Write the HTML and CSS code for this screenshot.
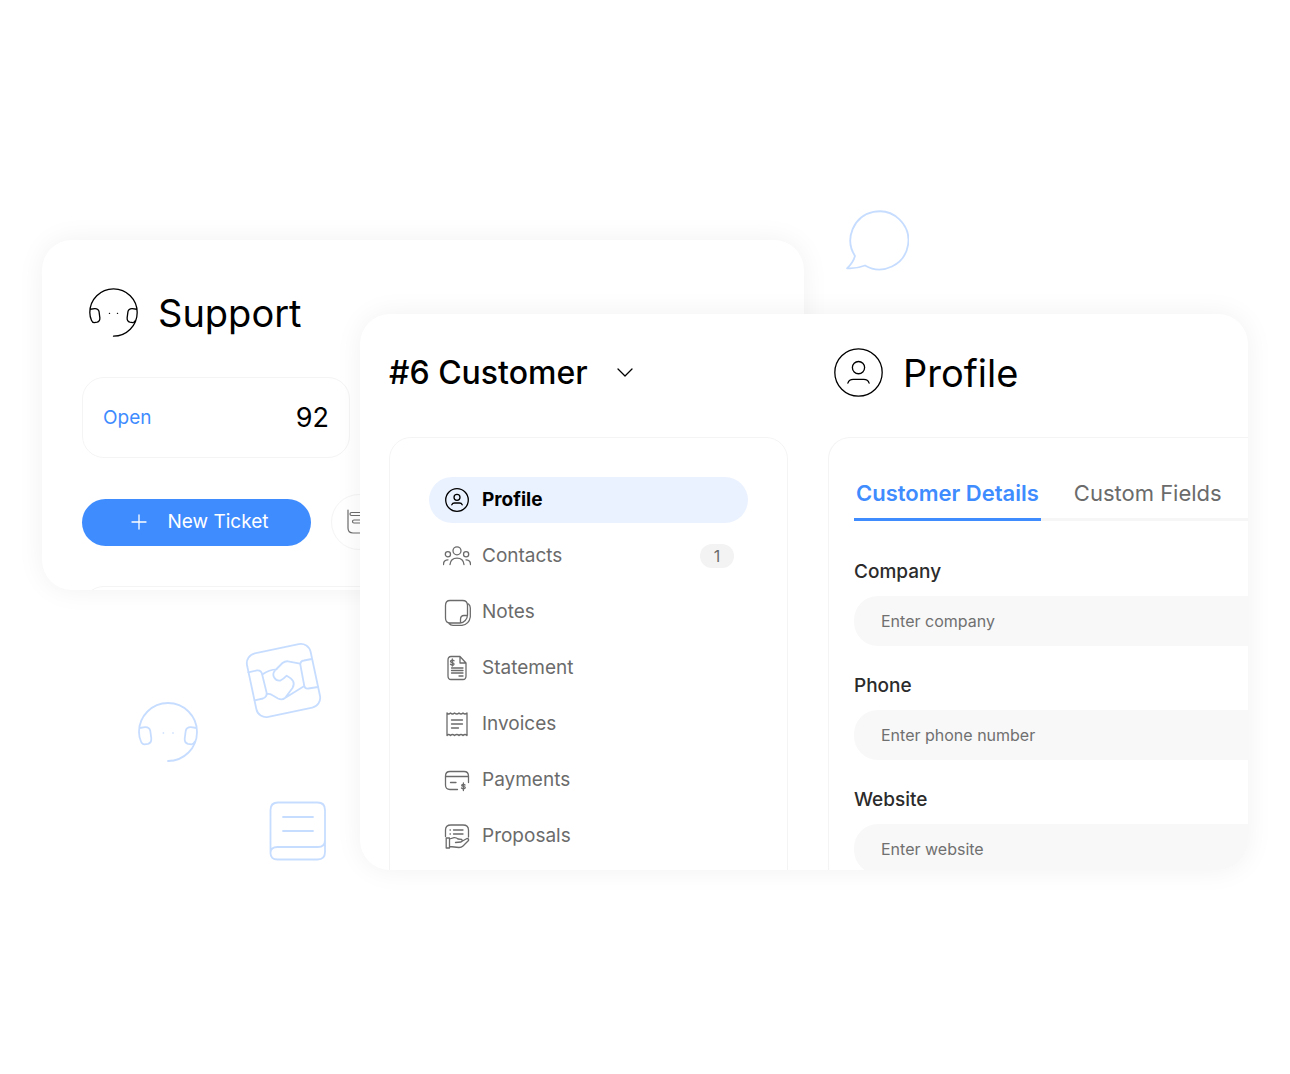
FILE: index.html
```html
<!DOCTYPE html>
<html lang="en">
<head>
<meta charset="utf-8">
<meta name="viewport" content="width=device-width, initial-scale=1">
<title>Support and customer profile</title>
<link rel="stylesheet" href="styles.css">
</head>
<body>
<main class="stage">
  <svg class="deco deco-chat" viewBox="0 0 64 64" aria-hidden="true"><path d="M10 48A29 29 0 1 1 20 57.500Q11 61 2 60.300Q8 55 10 48Z"/></svg>
  <svg class="deco deco-deal" viewBox="0 0 78 78" aria-hidden="true">
    <rect x="6" y="6" width="65" height="65" rx="10" transform="rotate(-12 38.500 38.500)"/>
    <path d="M3.300 30.300L12 28.400Q16.500 28 17.300 33L21.700 51Q22 55 18 56.500L9.700 58.300M66.700 17L59 18.500Q55.300 19 55.300 22.500L59.300 44Q60 47 63.500 46.500L73 45"/>
    <path d="M17.700 32.300Q24 27.500 31.700 27.300M55 21.700L43 19.300Q40 19 37.500 21L30 28.500C26 33 30 39.500 35.500 38.500Q38 37.500 41.700 33.700C48 37 50.500 41 47.500 46L40 56L59.300 44M21.700 52Q25 51.500 27 53L33 56.500Q37 58.500 40 56"/>
  </svg>
  <svg class="deco deco-headset" viewBox="0 0 60 60" aria-hidden="true">
    <path d="M1 30A29 29 0 1 1 59 30A29 29 0 0 1 30 59M1.500 26L7 25.200Q11.500 25 12.300 29L13.300 36.500Q13.500 41 10 41.800L6.500 42.300Q4 42.300 3 39.500Q1 35 1 30M58.500 26L53 25.200Q48.500 25 47.700 29L46.700 36.500Q46.500 41 50 41.800L53.500 42.300Q55.500 42.300 57 39.500"/>
    <path stroke-width="1.400" d="M25.200 31h.4M34.800 31h.4"/>
  </svg>
  <svg class="deco deco-book" viewBox="0 0 60 62" aria-hidden="true"><path d="M2.500 52V10Q2.500 2.500 10 2.500H49.500Q57 2.500 57 10V52Q57 59.500 49.500 59.500H9.500Q2.500 59.500 2.500 53Q2.500 47 9.500 47H50Q57 47 57 40M15 17H45M15 31H45"/></svg>

  <section class="card support">
    <header class="support-head">
      <svg class="head-icon" viewBox="0 0 60 60" aria-hidden="true">
        <path d="M1 30A29 29 0 1 1 59 30A29 29 0 0 1 30 59M1.500 26L7 25.200Q11.500 25 12.300 29L13.300 36.500Q13.500 41 10 41.800L6.500 42.300Q4 42.300 3 39.500Q1 35 1 30M58.500 26L53 25.200Q48.500 25 47.700 29L46.700 36.500Q46.500 41 50 41.800L53.500 42.300Q55.500 42.300 57 39.500"/>
        <path d="M25 31h.2M34.800 31h.2"/>
      </svg>
      <h1 class="page-title">Support</h1>
    </header>
    <a class="stat" href="#open"><span class="stat-name">Open</span><span class="stat-count">92</span></a>
    <div class="actions">
      <button class="new-ticket" type="button">
        <svg class="plus" viewBox="0 0 16 16" aria-hidden="true"><path d="M8 1V15M1 8H15"/></svg>
        New Ticket
      </button>
      <button class="round" type="button" aria-label="Charts">
        <svg class="chart" viewBox="0 0 24 26" aria-hidden="true"><path d="M1 1V19Q1 24 6 24H23M4.500 3.500H19Q20.500 5 19 6.500H4.500Q3 6.500 3 5Q3 3.500 4.500 3.500M7 11H17Q18.500 12.500 17 14H7Q5.500 14 5.500 12.500Q5.500 11 7 11"/></svg>
      </button>
    </div>
    <div class="panel list-panel"></div>
  </section>

  <section class="card customer">
    <div class="column">
      <header class="column-head">
        <button class="customer-select" type="button">#6 Customer
          <svg class="chevron" viewBox="0 0 16 10" aria-hidden="true"><path d="M1 1L8 8L15 1"/></svg>
        </button>
      </header>
      <nav class="panel menu" aria-label="Customer">
        <a class="item active" href="#profile">
          <svg class="icon" viewBox="0 0 28 28" aria-hidden="true"><circle cx="14" cy="14" r="11.300"/><circle cx="14" cy="11.300" r="3"/><path d="M8.800 18.800Q9.500 17 11.500 17H16.500Q18.500 17 19.200 18.800"/></svg>
          Profile</a>
        <a class="item" href="#contacts">
          <svg class="icon" viewBox="0 0 28 28" aria-hidden="true"><circle cx="14" cy="8.800" r="4"/><circle cx="4.900" cy="12.300" r="2.600"/><circle cx="23.100" cy="12.300" r="2.600"/><path d="M7 22.500C7.500 17.800 10 16.200 14 16.200S20.500 17.800 21 22.500M.500 22.500Q.500 17.800 5 17.800M27.500 22.500Q27.500 17.800 23 17.800"/></svg>
          Contacts<span class="count">1</span></a>
        <a class="item" href="#notes">
          <svg class="icon" viewBox="0 0 28 28" aria-hidden="true"><path d="M7 2.500H19.500Q24.500 2.500 24.500 7.500V17C24.500 21 21 25 17 25H7Q2.500 25 2.500 20V7.500Q2.500 2.500 7 2.500ZM17.500 25V21.500Q17.500 17.500 21 17.500H24.500M25.500 6Q27.300 7.500 27.300 10V19Q26 26.500 19 27.300H10Q7.500 27.300 6 25.500"/></svg>
          Notes</a>
        <a class="item" href="#statement">
          <svg class="icon" viewBox="0 0 28 28" aria-hidden="true"><path d="M8 2.500H17L23 9V22Q23 25.500 20 25.500H8Q5 25.500 5 22V6Q5 2.500 8 2.500ZM17 2.500V9H23M8.500 14H20M8.500 16.500H20M8.500 19H20M16 22H20M11 6.800C10 5.700 7.500 6 7.500 7.500S11 8.300 11 10S8.500 11.300 7.500 10.200M9.300 5V12"/></svg>
          Statement</a>
        <a class="item" href="#invoices">
          <svg class="icon" viewBox="0 0 28 28" aria-hidden="true"><path d="M4 3Q5.500 5 7.500 3Q9.500 5 11.500 3Q14 5 16 3Q18 5 20 3Q22 5 24 3V25.500Q22 23.500 20 25.500Q18 23.500 16 25.500Q14 23.500 11.500 25.500Q9.500 23.500 7.500 25.500Q5.500 23.500 4 25.500ZM8.500 10H19.500M8.500 14H19.500M8.500 18H15.500"/></svg>
          Invoices</a>
        <a class="item" href="#payments">
          <svg class="icon" viewBox="0 0 28 28" aria-hidden="true"><path d="M14.500 23.500H7Q2.500 23.500 2.500 19V10Q2.500 5.500 7 5.500H21Q25.500 5.500 25.500 10V16.500M2.500 10.500H25.500M7.500 16.500H13M22 19C21 18 18.700 18.200 18.700 19.500S22.300 20 22.300 21.600S19.500 23.200 18.500 22M20.400 17V24.500"/></svg>
          Payments</a>
        <a class="item" href="#proposals">
          <svg class="icon" viewBox="0 0 28 28" aria-hidden="true"><path d="M2.500 14.500V8Q2.500 3 8 3H20Q25.500 3 25.500 8V15M7 8H7.400M10.500 8H20M7 12H7.400M10.500 12H20M3.200 16H6.500V26H3.200ZM6.500 17L11 15.700Q13.500 15.500 15 17L18.500 17.300Q20 19 18 20L12.500 20.500M19.500 19L24 16.500Q26 16.500 25.500 18.500L20 24Q18.500 25.500 16 25.500L6.500 24.500"/></svg>
          Proposals</a>
      </nav>
    </div>
    <div class="column">
      <header class="column-head profile-head">
        <svg class="head-icon" viewBox="0 0 60 60" aria-hidden="true"><circle cx="30" cy="30" r="29"/><circle cx="30" cy="24" r="7.500"/><path d="M17 43Q18.500 38.500 23.500 38.500H36.500Q41.500 38.500 43 43"/></svg>
        <h2 class="page-title">Profile</h2>
      </header>
      <div class="panel details">
        <div class="tabs" role="tablist">
          <button class="tab selected" type="button" role="tab" aria-selected="true">Customer Details</button>
          <button class="tab" type="button" role="tab" aria-selected="false">Custom Fields</button>
        </div>
        <form class="fields">
          <div class="field"><label for="company">Company</label><input id="company" type="text" placeholder="Enter company"></div>
          <div class="field"><label for="phone">Phone</label><input id="phone" type="tel" placeholder="Enter phone number"></div>
          <div class="field"><label for="website">Website</label><input id="website" type="text" placeholder="Enter website"></div>
        </form>
      </div>
    </div>
  </section>
</main>
</body>
</html>
```
FILE: styles.css
```css
:root {
  --blue: #3f8cff;
  --gray: #6b6b6b;
  --line: #f4f4f4;
}

* { box-sizing: border-box; }

body {
  margin: 0;
  background: #fff;
  color: #000;
  font-family: Inter, "Liberation Sans", sans-serif;
  font-size: 19px;
  line-height: 24px;
}

button, input { font: inherit; }
button { cursor: pointer; }
a { color: inherit; text-decoration: none; }
h1, h2 { margin: 0; }

svg {
  flex: none;
  fill: none;
  stroke: currentColor;
  stroke-linecap: round;
  stroke-linejoin: round;
}

/* The two cards share the middle column and overlap there */
.stage {
  position: relative;
  display: grid;
  grid-template-columns: 318fr 444fr 444fr;
  grid-template-rows: 74px 276px 280px;
  min-height: 100vh;
  padding: 240px 42px 0;
  align-content: start;
  overflow: hidden;
}

.card {
  min-width: 0;
  min-height: 0;
  overflow: hidden;
  background: #fff;
  border-radius: 30px;
  box-shadow: 0 0 28px rgba(0, 0, 0, 0.06);
}

.panel {
  border: 1px solid var(--line);
  border-radius: 22px;
}

.head-icon {
  width: 49px;
  height: 49px;
  stroke-width: 1.600;
}

.page-title {
  font-size: 38px;
  font-weight: 400;
  line-height: 48px;
}

/* Support card */
.support {
  grid-area: 1 / 1 / 3 / 3;
  padding: 48px 40px 0;
}

.support-head {
  display: flex;
  align-items: center;
  gap: 20px;
  padding-left: 7px;
  margin-bottom: 40px;
}

.stat {
  display: flex;
  align-items: center;
  justify-content: space-between;
  width: 268px;
  height: 81px;
  padding: 0 20px;
  border: 1px solid var(--line);
  border-radius: 22px;
}

.stat-name { color: var(--blue); }
.stat-count { font-size: 27px; }

.actions {
  display: flex;
  align-items: center;
  gap: 20px;
  margin: 36px 0;
}

.new-ticket {
  display: flex;
  align-items: center;
  justify-content: center;
  gap: 21px;
  width: 229px;
  height: 47px;
  padding: 0 0 0 6px;
  border: 0;
  border-radius: 24px;
  background: var(--blue);
  color: #fff;
}

.plus { width: 16px; height: 16px; stroke-width: 1.300; }

.round {
  display: grid;
  place-items: center;
  width: 56px;
  height: 56px;
  padding: 0;
  border: 1px solid var(--line);
  border-radius: 50%;
  background: none;
  color: var(--gray);
}

.chart { width: 24px; height: 26px; stroke-width: 1.200; }

.list-panel { height: 80px; }

/* Customer card */
.customer {
  grid-area: 2 / 2 / 4 / 4;
  display: grid;
  grid-template-columns: 399fr 420fr;
  gap: 40px;
  padding: 34px 0 0 29px;
}

.column { min-width: 0; }

.column-head {
  display: flex;
  align-items: center;
  height: 49px;
  margin-bottom: 40px;
}

.profile-head {
  gap: 20px;
  padding-left: 6px;
}

.customer-select {
  display: flex;
  align-items: center;
  gap: 29px;
  padding: 0;
  border: 0;
  background: none;
  color: #000;
  font-size: 32px;
  font-weight: 500;
  line-height: 40px;
}

.chevron { width: 16px; height: 10px; stroke-width: 1.300; }

.menu {
  display: flex;
  flex-direction: column;
  gap: 10px;
  padding: 39px 39px 40px;
}

.item {
  display: flex;
  align-items: center;
  gap: 11px;
  height: 46px;
  padding: 0 14px;
  border-radius: 23px;
  color: var(--gray);
}

.icon { width: 28px; height: 28px; stroke-width: 1.300; }

.active {
  background: #ebf2ff;
  color: #000;
  font-weight: 700;
}

.count {
  width: 34px;
  margin-left: auto;
  border-radius: 12px;
  background: #f3f3f3;
  font-size: 16px;
  text-align: center;
}

.details {
  padding: 41px 0 40px 25px;
  border-right: 0;
  border-radius: 22px 0 0 0;
}

.tabs {
  display: flex;
  gap: 31px;
  box-shadow: inset 0 -3px #f6f6f6;
}

.tab {
  padding: 0 2px 11px;
  border: 0;
  border-bottom: 3px solid transparent;
  background: none;
  color: var(--gray);
  font-size: 22px;
  line-height: 28px;
  white-space: nowrap;
}

.selected {
  border-color: var(--blue);
  color: var(--blue);
  font-weight: 600;
}

.fields {
  display: grid;
  gap: 28px;
  padding-top: 39px;
}

.field {
  display: grid;
  gap: 12px;
}

.field label {
  color: #2b2b2b;
  font-weight: 500;
}

.field input {
  width: 100%;
  height: 50px;
  padding: 0 27px;
  border: 0;
  border-radius: 24px 0 0 24px;
  background: #f8f8f8;
  font-size: 16px;
}

.field input::placeholder { color: #707070; opacity: 1; }

/* Outline drawings scattered around the cards */
.deco {
  position: absolute;
  color: #c7ddff;
  stroke-width: 1.800;
}

.deco-chat { left: 845px; top: 208px; width: 64px; }
.deco-deal { left: 245px; top: 642px; width: 78px; }
.deco-headset { left: 138px; top: 702px; width: 60px; }
.deco-book { left: 268px; top: 800px; width: 60px; }
```
